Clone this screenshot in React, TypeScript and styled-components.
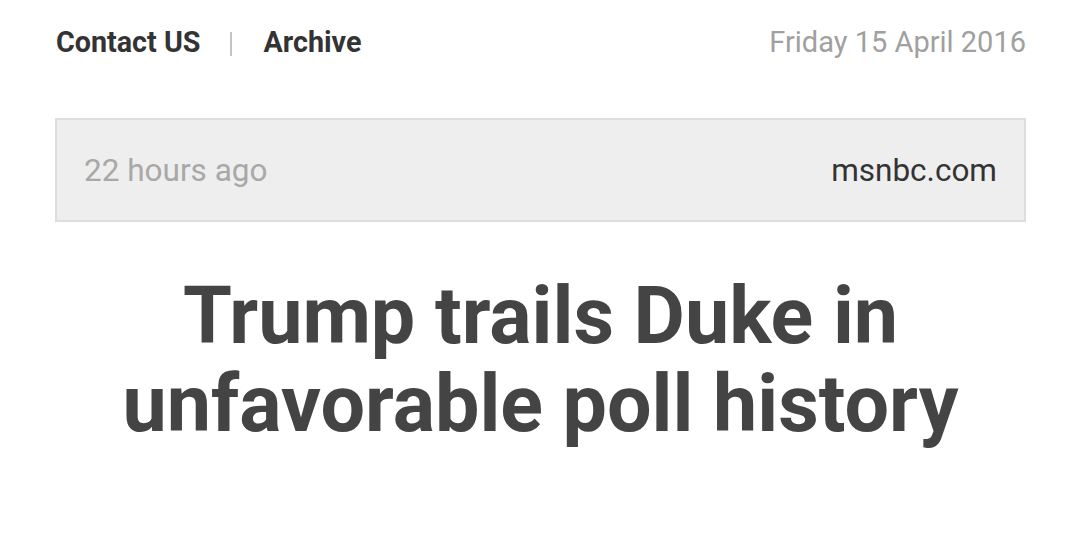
import styled, { createGlobalStyle } from 'styled-components';

const GlobalStyle = createGlobalStyle`
  html, body {
    margin: 0;
    padding: 0;
    background: #ffffff;
  }
  body {
    font-family: Roboto, 'Liberation Sans', sans-serif;
  }
`;

const Page = styled.div`
  box-sizing: border-box;
  width: 1067px;
  padding: 0 41px 0 55px;
`;

const TopBar = styled.header`
  display: flex;
  justify-content: space-between;
  align-items: center;
  height: 84px;
  padding-left: 1px;
`;

const Nav = styled.nav`
  display: flex;
  align-items: center;
`;

const NavLink = styled.a`
  font-size: 28.7px;
  font-weight: 700;
  color: #333333;
  text-decoration: none;
`;

const Divider = styled.span`
  display: inline-block;
  width: 2px;
  height: 24px;
  margin: 4px 31px 0 30px;
  background: #c4c4c4;
`;

const DateText = styled.span`
  font-size: 29px;
  color: #a0a0a0;
`;

const MetaBox = styled.div`
  display: flex;
  justify-content: space-between;
  align-items: center;
  box-sizing: border-box;
  height: 104px;
  margin-top: 34px;
  padding: 0 27px 0 27px;
  background: #eeeeee;
  border: 2px solid #dddddd;
`;

const MetaText = styled.span<{ $dark?: boolean }>`
  font-size: 31.5px;
  color: ${(p) => (p.$dark ? '#333333' : '#a8a8a8')};
`;

const Headline = styled.h1`
  margin: 50px 0 0;
  text-align: center;
  font-size: 79px;
  line-height: 88px;
  font-weight: 700;
  color: #444444;
`;

export default function App() {
  return (
    <>
      <GlobalStyle />
      <Page>
        <TopBar>
          <Nav>
            <NavLink href="#">Contact US</NavLink>
            <Divider />
            <NavLink href="#">Archive</NavLink>
          </Nav>
          <DateText>Friday 15 April 2016</DateText>
        </TopBar>
        <MetaBox>
          <MetaText>22 hours ago</MetaText>
          <MetaText $dark>msnbc.com</MetaText>
        </MetaBox>
        <Headline>
          Trump trails Duke in
          <br />
          unfavorable poll history
        </Headline>
      </Page>
    </>
  );
}
